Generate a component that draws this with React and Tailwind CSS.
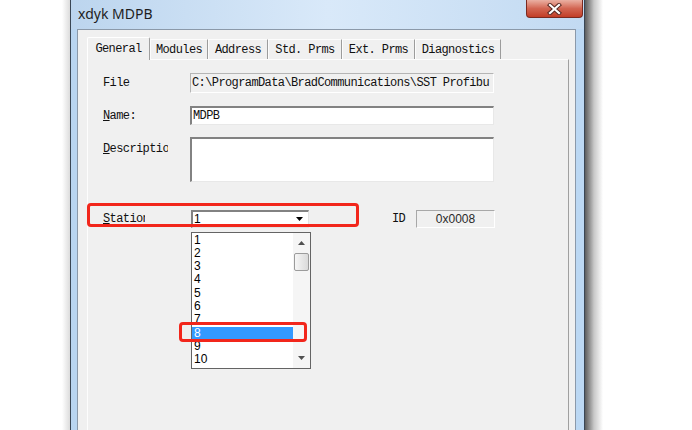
import React from 'react';

const mono = "font-['Liberation_Mono',monospace] text-[12px] tracking-[-0.6px] text-[#111111]";
const sans = "font-['Liberation_Sans',Arial,sans-serif] text-[12px] text-black";

const tabs = [
  { label: 'General', w: 'w-[63px]', active: true },
  { label: 'Modules', w: 'w-[58px]' },
  { label: 'Address', w: 'w-[60px]' },
  { label: 'Std. Prms', w: 'w-[74px]' },
  { label: 'Ext. Prms', w: 'w-[73px]' },
  { label: 'Diagnostics', w: 'w-[86px]' },
];

const items = ['1', '2', '3', '4', '5', '6', '7', '8', '9', '10'];

function CloseButton() {
  return (
    <div className="mr-px w-[57px] h-[18px] rounded-b-[4px] border border-t-0 border-[#7b2a20] bg-linear-to-b from-[#eab0a3] via-[#d26552] to-[#c23d26] flex items-center justify-center">
      <svg width="15" height="12" viewBox="0 0 15 12">
        <path d="M3 2 L12 10 M12 2 L3 10" stroke="#5a2a24" strokeWidth="4.2" strokeLinecap="square" />
        <path d="M3 2 L12 10 M12 2 L3 10" stroke="#ffffff" strokeWidth="2.2" strokeLinecap="square" />
      </svg>
    </div>
  );
}

function Arrow({ up, color = '#000' }) {
  return (
    <svg width="7" height="4" viewBox="0 0 7 4">
      <path d={up ? 'M0 4 L3.5 0 L7 4 Z' : 'M0 0 L7 0 L3.5 4 Z'} fill={color} />
    </svg>
  );
}

function StationList() {
  return (
    <div className="absolute -left-[2px] top-[20px] w-[120px] h-[137px] bg-white border border-[#646464] flex z-20">
      <div className="flex-1 pt-px">
        {items.map((it) => (
          <div
            key={it}
            className={
              it === '8'
                ? 'h-[13.33px] leading-[13px] pl-[2px] bg-[#3399ff] text-white ' + "font-['Liberation_Sans',Arial,sans-serif] text-[12px]"
                : 'h-[13.33px] leading-[13px] pl-[2px] ' + sans
            }
          >
            {it}
          </div>
        ))}
      </div>
      <div className="w-[17px] h-full bg-[#f5f5f5] flex flex-col items-center">
        <div className="h-[20px] flex items-center justify-center">
          <Arrow up color="#505050" />
        </div>
        <div className="w-[15px] h-[18px] rounded-[2px] border border-[#9b9b9b] bg-linear-to-r from-[#f6f6f6] to-[#dadada]" />
        <div className="flex-1" />
        <div className="h-[20px] flex items-center justify-center">
          <Arrow color="#505050" />
        </div>
      </div>
    </div>
  );
}

export default function App() {
  return (
    <div className="relative w-[692px] h-[430px] overflow-hidden bg-white flex">
      {/* desktop left + faint shadow */}
      <div className="w-[70px] h-full flex justify-end">
        <div className="w-[8px] h-full bg-linear-to-r from-white to-[#dcdcdc]" />
      </div>

      {/* window */}
      <div className="w-[515px] h-full flex flex-col border-x border-[#3a4654] bg-[#bdd7f1]">
        {/* title bar */}
        <div className="h-[29px] flex items-start justify-between bg-linear-to-r from-[#bcd5ee] via-[#d9e9f9] to-[#c2daf2]">
          <div className="pl-[7px] pt-[3px] font-['Noto_Sans',sans-serif] text-[14px] text-[#1e1e1e]">xdyk MDPB</div>
          <CloseButton />
        </div>

        {/* body */}
        <div className="flex-1 flex">
          <div className="w-[6px] bg-[#b9d5f0]" />
          <div className="flex-1 bg-[#f0f0f0] border-l border-t border-r border-[#8b99a9] pl-[9px] pt-[7px] pr-[6px] flex flex-col">
            {/* tabs */}
            <div className="h-[22px] flex items-end relative z-10">
              {tabs.map((t) =>
                t.active ? (
                  <div
                    key={t.label}
                    className={t.w + ' h-[23px] -mb-px bg-[#f0f0f0] border-l border-t border-white border-r border-r-[#a0a0a0] rounded-t-[2px] flex items-center justify-center ' + mono}
                  >
                    {t.label}
                  </div>
                ) : (
                  <div
                    key={t.label}
                    className={t.w + ' h-[20px] border-l border-t border-[#fcfcfc] border-r border-r-[#9c9c9c] flex items-center justify-center ' + mono}
                  >
                    {t.label}
                  </div>
                )
              )}
            </div>

            {/* tab page */}
            <div className="flex-1 border-t border-l border-[#fdfdfd] border-r border-r-[#a0a0a0] pl-[15px]">
              {/* File */}
              <div className="mt-[13px] h-[20px] flex items-center">
                <div className={'w-[87px] ' + mono}>File</div>
                <div className={'w-[304px] h-[20px] bg-[#f0f0f0] border-t border-l border-[#b5b5b5] border-b border-r border-b-white border-r-white pl-[1px] flex items-center whitespace-nowrap overflow-hidden ' + mono}>
                  C:\ProgramData\BradCommunications\SST Profibu
                </div>
              </div>

              {/* Name */}
              <div className="mt-[13px] h-[19px] flex items-center">
                <div className={'w-[87px] ' + mono}>
                  <u>N</u>ame:
                </div>
                <div className={'w-[304px] h-[19px] bg-white border-t-2 border-l-2 border-[#828282] border-b border-r border-b-[#e8e8e8] border-r-[#e8e8e8] pl-[1px] flex items-center ' + mono}>
                  MDPB
                </div>
              </div>

              {/* Description */}
              <div className="mt-[12px] h-[45px] flex items-start">
                <div className="w-[87px] pt-[3px]">
                  <div className={'w-[65px] overflow-hidden whitespace-nowrap ' + mono}>
                    <u>D</u>escription
                  </div>
                </div>
                <div className="w-[304px] h-[45px] bg-white border-t-2 border-l-2 border-[#828282] border-b border-r border-b-[#e8e8e8] border-r-[#e8e8e8]" />
              </div>

              {/* Station + ID */}
              <div className="mt-[27px] h-[19px] flex items-center">
                <div className="w-[88px]">
                  <div className={'w-[42px] overflow-hidden whitespace-nowrap ' + mono}>
                    <u>S</u>tation
                  </div>
                </div>
                <div className="relative w-[118px] h-[18px] bg-white border-t-2 border-l-2 border-[#828282] border-b border-r border-b-[#e3e3e3] border-r-[#e3e3e3] flex items-center">
                  <div className={'flex-1 pl-[1px] leading-[14px] ' + sans}>1</div>
                  <div className="w-[17px] h-full flex items-center justify-center">
                    <Arrow />
                  </div>
                  <StationList />
                </div>
                <div className={'ml-[83px] w-[24px] ' + mono}>ID</div>
                <div className={'w-[79px] h-[18px] bg-[#f0f0f0] border-t border-l border-[#a8a8a8] border-b border-r border-b-white border-r-white flex items-center justify-center ' + "font-['Liberation_Sans',Arial,sans-serif] text-[12px] text-[#2a2a2a]"}>
                  0x0008
                </div>
              </div>
            </div>
          </div>
          <div className="w-[8px] bg-[#bcd8f3]" />
        </div>
      </div>

      {/* right shadow */}
      <div className="w-[18px] h-full bg-linear-to-r from-[#5e5e5e] via-[#c8c8c8] to-white" />

      {/* red annotation boxes */}
      <div className="absolute left-[87px] top-[203px] w-[272px] h-[24px] border-[3px] border-[#f2261b] rounded-[4px] z-30" />
      <div className="absolute left-[179px] top-[322px] w-[128px] h-[20px] border-[3px] border-[#f2261b] rounded-[4px] z-30" />
    </div>
  );
}
